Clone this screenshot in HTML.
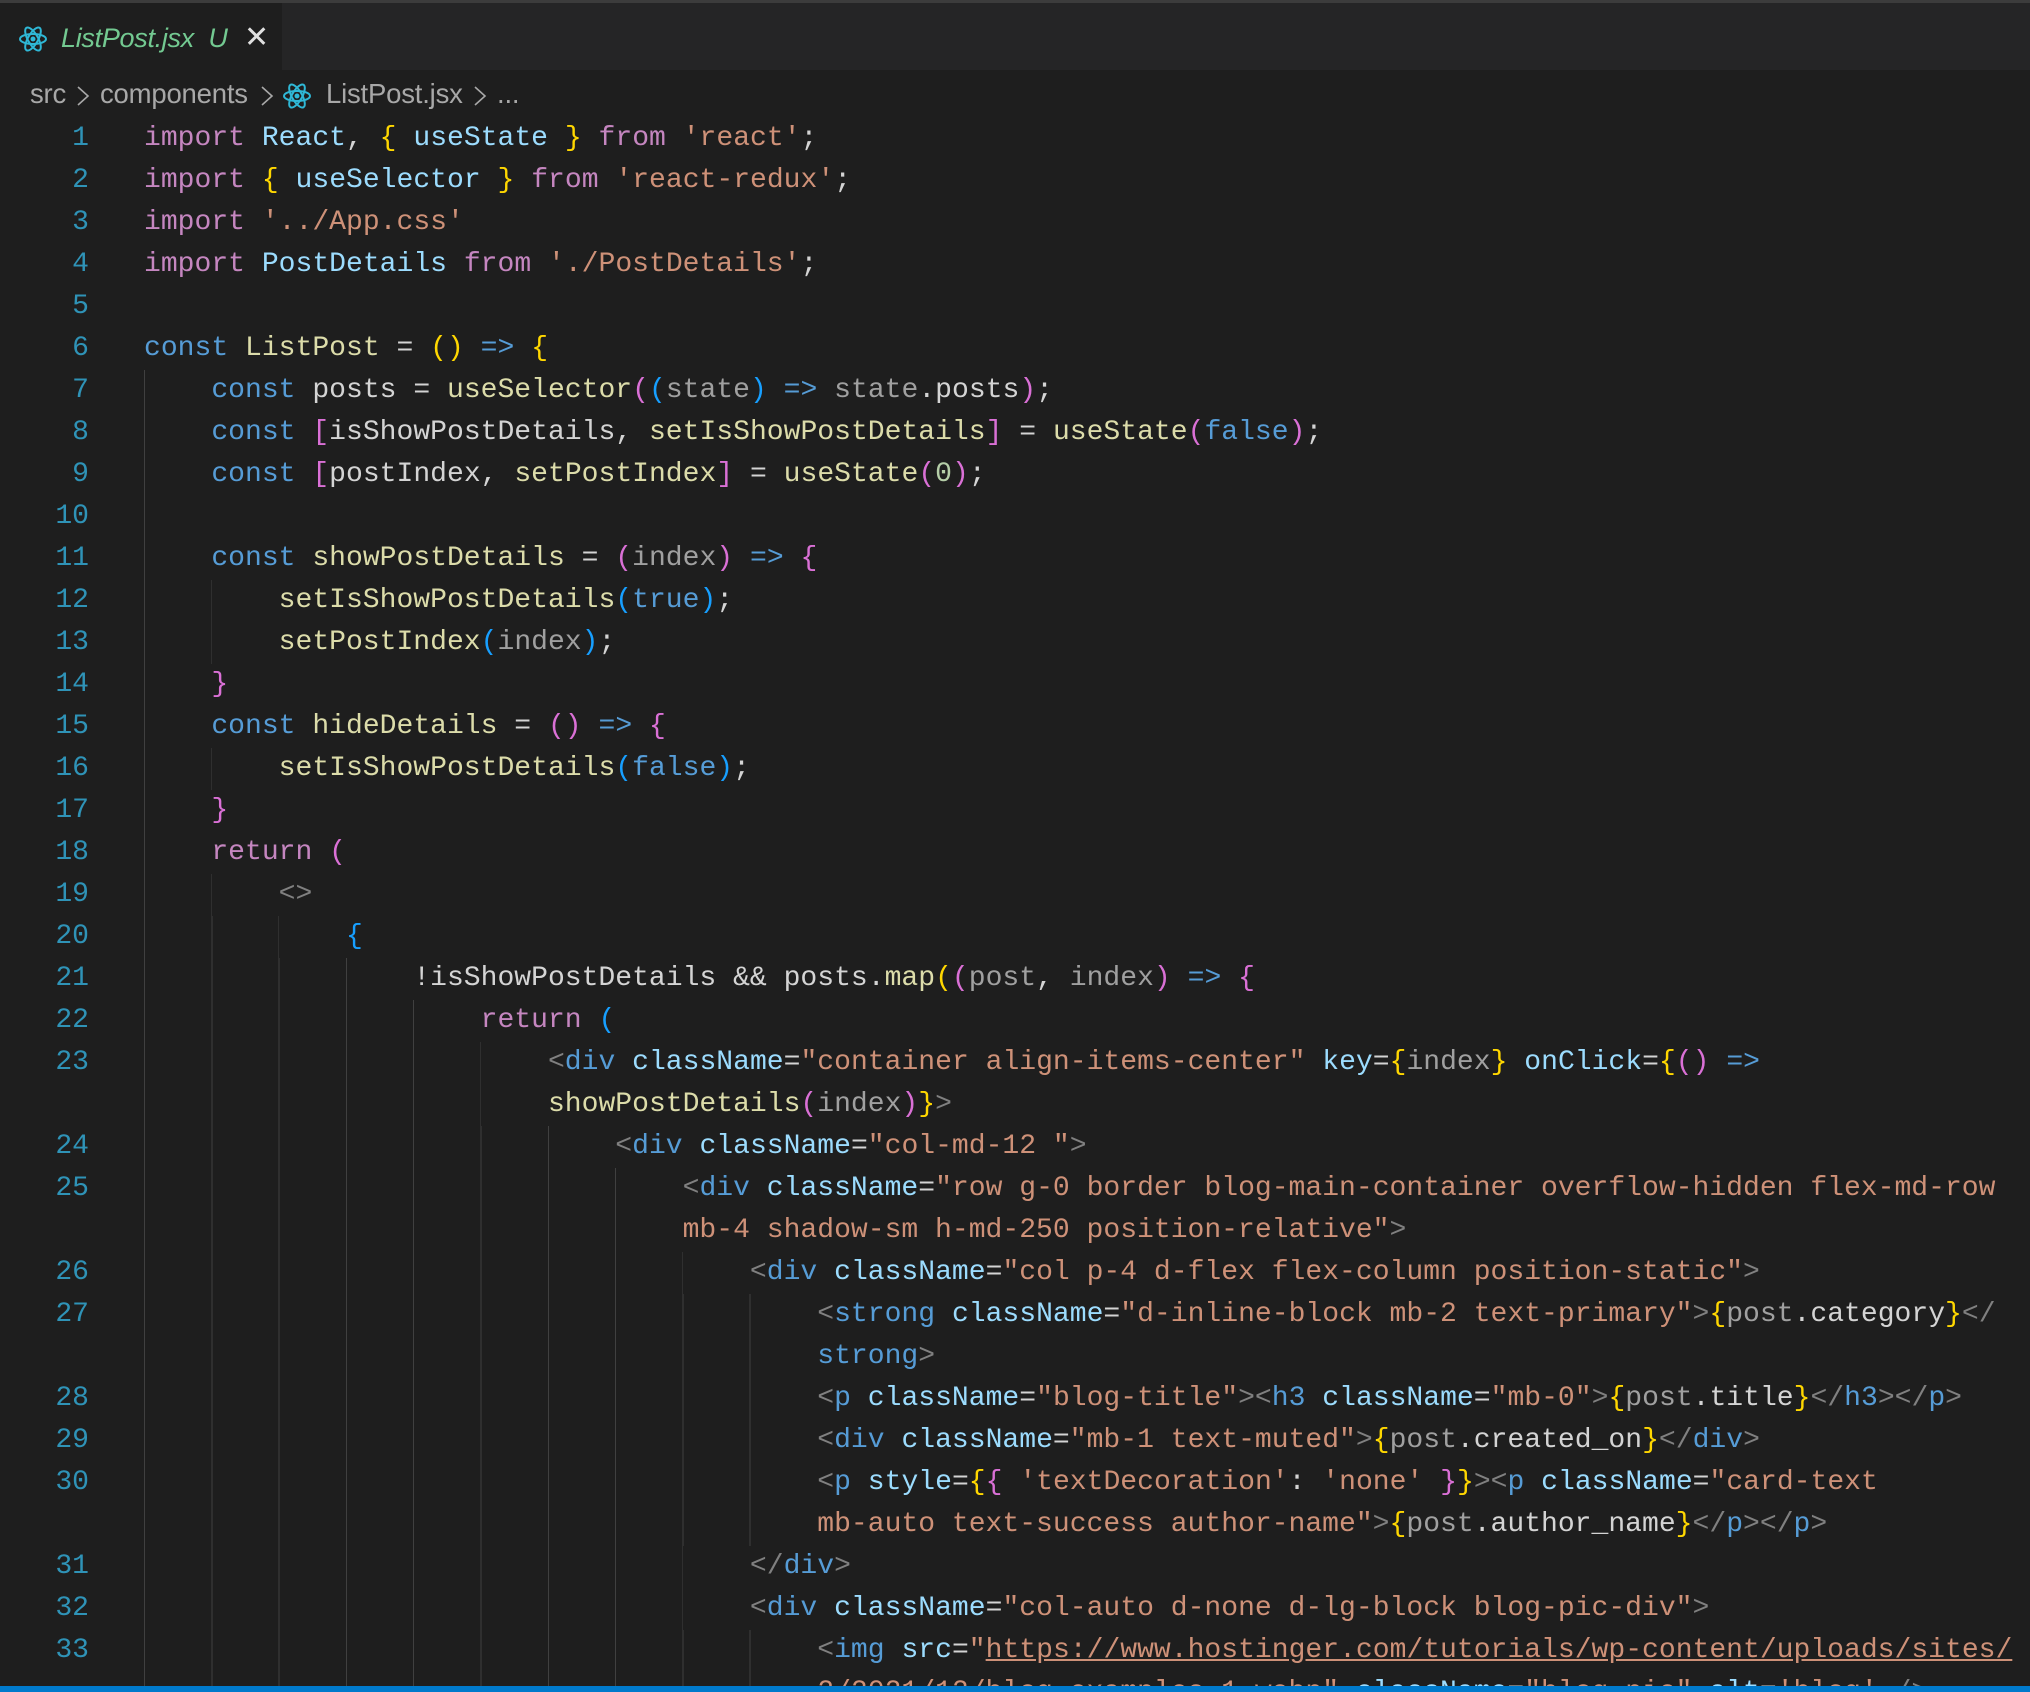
<!DOCTYPE html>
<html><head><meta charset="utf-8"><style>
html,body{margin:0;padding:0;background:#1e1e1e;width:2030px;height:1692px;overflow:hidden;position:relative}
.topline{position:absolute;left:0;top:0;width:2030px;height:3px;background:#3c3c3c}
.tabbar{position:absolute;left:0;top:3px;width:2030px;height:67px;background:#252526}
.tab{position:absolute;left:0;top:3px;width:282px;height:67px;background:#1e1e1e}
.tabtxt{position:absolute;left:61px;top:20px;font:italic 27px "Liberation Sans",sans-serif;color:#73c991;white-space:pre;letter-spacing:-0.3px}
.x{position:absolute;left:244px;top:17px;font:30px "Liberation Sans",sans-serif;color:#e0e0e0}
.bc{position:absolute;top:78px;font:27.5px "Liberation Sans",sans-serif;color:#a8a8a8;white-space:pre;line-height:32px;letter-spacing:-0.2px}
.row{position:absolute;left:0;height:42px;width:2030px;line-height:42px;font-family:"Liberation Mono",monospace;font-size:28.05px;white-space:pre;color:#d4d4d4;margin-top:3px}
.ln{position:absolute;left:0;width:89px;text-align:right;color:#2f93b7}
.code{position:absolute;left:144px}
.gd{position:absolute;left:144px;top:0;height:42px;background:repeating-linear-gradient(to right,#404040 0 1px,transparent 1px 67.3px)}
.k{color:#c586c0}.s{color:#569cd6}.v{color:#9cdcfe}.f{color:#dcdcaa}.t{color:#ce9178}.g{color:#808080}.m{color:#a0a0a0}.y{color:#ffd700}.pk{color:#da70d6}.b{color:#179fff}.n{color:#b5cea8}.w{color:#d4d4d4}.u{text-decoration:underline}
.status{position:absolute;left:0;top:1686px;width:2030px;height:6px;background:#007acc}
</style></head><body>
<div class="topline"></div>
<div class="tabbar"></div>
<div class="tab">
<svg style="position:absolute;left:18px;top:21px" width="30" height="30" viewBox="-15 -15 30 30"><g fill="none" stroke="#2fb8d6" stroke-width="2"><ellipse rx="13" ry="5"/><ellipse rx="13" ry="5" transform="rotate(60)"/><ellipse rx="13" ry="5" transform="rotate(120)"/></g><circle r="2.5" fill="#2fb8d6"/></svg>
<div class="tabtxt">ListPost.jsx  U</div>
<div class="x">✕</div>
</div>
<div class="bc" style="left:30px">src</div>
<div class="bc" style="left:100px">components</div>
<div class="bc" style="left:326px">ListPost.jsx</div>
<div class="bc" style="left:497px">...</div>
<svg style="position:absolute;left:0;top:80px" width="520" height="32"><g fill="none" stroke="#a8a8a8" stroke-width="1.6"><path d="M78 7 L88 16 L78 25"/><path d="M262 7 L272 16 L262 25"/><path d="M475 7 L485 16 L475 25"/></g></svg>
<svg style="position:absolute;left:282px;top:81px" width="30" height="30" viewBox="-15 -15 30 30"><g fill="none" stroke="#2fb8d6" stroke-width="2"><ellipse rx="13" ry="5"/><ellipse rx="13" ry="5" transform="rotate(60)"/><ellipse rx="13" ry="5" transform="rotate(120)"/></g><circle r="2.5" fill="#2fb8d6"/></svg>

<div class="row" style="top:115px"><span class="ln">1</span><span class="code"><span class="k">import</span> <span class="v">React</span>, <span class="y">{</span> <span class="v">useState</span> <span class="y">}</span> <span class="k">from</span> <span class="t">'react'</span>;</span></div>
<div class="row" style="top:157px"><span class="ln">2</span><span class="code"><span class="k">import</span> <span class="y">{</span> <span class="v">useSelector</span> <span class="y">}</span> <span class="k">from</span> <span class="t">'react-redux'</span>;</span></div>
<div class="row" style="top:199px"><span class="ln">3</span><span class="code"><span class="k">import</span> <span class="t">'../App.css'</span></span></div>
<div class="row" style="top:241px"><span class="ln">4</span><span class="code"><span class="k">import</span> <span class="v">PostDetails</span> <span class="k">from</span> <span class="t">'./PostDetails'</span>;</span></div>
<div class="row" style="top:283px"><span class="ln">5</span></div>
<div class="row" style="top:325px"><span class="ln">6</span><span class="code"><span class="s">const</span> <span class="f">ListPost</span> = <span class="y">()</span> <span class="s">=&gt;</span> <span class="y">{</span></span></div>
<div class="row" style="top:367px"><span class="ln">7</span><span class="gd" style="width:1px"></span><span class="code">    <span class="s">const</span> <span class="w">posts</span> = <span class="f">useSelector</span><span class="pk">(</span><span class="b">(</span><span class="m">state</span><span class="b">)</span> <span class="s">=&gt;</span> <span class="m">state</span>.<span class="w">posts</span><span class="pk">)</span>;</span></div>
<div class="row" style="top:409px"><span class="ln">8</span><span class="gd" style="width:1px"></span><span class="code">    <span class="s">const</span> <span class="pk">[</span><span class="w">isShowPostDetails</span>, <span class="f">setIsShowPostDetails</span><span class="pk">]</span> = <span class="f">useState</span><span class="pk">(</span><span class="s">false</span><span class="pk">)</span>;</span></div>
<div class="row" style="top:451px"><span class="ln">9</span><span class="gd" style="width:1px"></span><span class="code">    <span class="s">const</span> <span class="pk">[</span><span class="w">postIndex</span>, <span class="f">setPostIndex</span><span class="pk">]</span> = <span class="f">useState</span><span class="pk">(</span><span class="n">0</span><span class="pk">)</span>;</span></div>
<div class="row" style="top:493px"><span class="ln">10</span><span class="gd" style="width:1px"></span></div>
<div class="row" style="top:535px"><span class="ln">11</span><span class="gd" style="width:1px"></span><span class="code">    <span class="s">const</span> <span class="f">showPostDetails</span> = <span class="pk">(</span><span class="m">index</span><span class="pk">)</span> <span class="s">=&gt;</span> <span class="pk">{</span></span></div>
<div class="row" style="top:577px"><span class="ln">12</span><span class="gd" style="width:68px"></span><span class="code">        <span class="f">setIsShowPostDetails</span><span class="b">(</span><span class="s">true</span><span class="b">)</span>;</span></div>
<div class="row" style="top:619px"><span class="ln">13</span><span class="gd" style="width:68px"></span><span class="code">        <span class="f">setPostIndex</span><span class="b">(</span><span class="m">index</span><span class="b">)</span>;</span></div>
<div class="row" style="top:661px"><span class="ln">14</span><span class="gd" style="width:1px"></span><span class="code">    <span class="pk">}</span></span></div>
<div class="row" style="top:703px"><span class="ln">15</span><span class="gd" style="width:1px"></span><span class="code">    <span class="s">const</span> <span class="f">hideDetails</span> = <span class="pk">()</span> <span class="s">=&gt;</span> <span class="pk">{</span></span></div>
<div class="row" style="top:745px"><span class="ln">16</span><span class="gd" style="width:68px"></span><span class="code">        <span class="f">setIsShowPostDetails</span><span class="b">(</span><span class="s">false</span><span class="b">)</span>;</span></div>
<div class="row" style="top:787px"><span class="ln">17</span><span class="gd" style="width:1px"></span><span class="code">    <span class="pk">}</span></span></div>
<div class="row" style="top:829px"><span class="ln">18</span><span class="gd" style="width:1px"></span><span class="code">    <span class="k">return</span> <span class="pk">(</span></span></div>
<div class="row" style="top:871px"><span class="ln">19</span><span class="gd" style="width:68px"></span><span class="code">        <span class="g">&lt;&gt;</span></span></div>
<div class="row" style="top:913px"><span class="ln">20</span><span class="gd" style="width:135px"></span><span class="code">            <span class="b">{</span></span></div>
<div class="row" style="top:955px"><span class="ln">21</span><span class="gd" style="width:203px"></span><span class="code">                !<span class="w">isShowPostDetails</span> &amp;&amp; <span class="w">posts</span>.<span class="f">map</span><span class="y">(</span><span class="pk">(</span><span class="m">post</span>, <span class="m">index</span><span class="pk">)</span> <span class="s">=&gt;</span> <span class="pk">{</span></span></div>
<div class="row" style="top:997px"><span class="ln">22</span><span class="gd" style="width:270px"></span><span class="code">                    <span class="k">return</span> <span class="b">(</span></span></div>
<div class="row" style="top:1039px"><span class="ln">23</span><span class="gd" style="width:337px"></span><span class="code">                        <span class="g">&lt;</span><span class="s">div</span> <span class="v">className</span>=<span class="t">"container align-items-center"</span> <span class="v">key</span>=<span class="y">{</span><span class="m">index</span><span class="y">}</span> <span class="v">onClick</span>=<span class="y">{</span><span class="pk">()</span> <span class="s">=&gt;</span></span></div>
<div class="row" style="top:1081px"><span class="gd" style="width:337px"></span><span class="code">                        <span class="f">showPostDetails</span><span class="pk">(</span><span class="m">index</span><span class="pk">)</span><span class="y">}</span><span class="g">&gt;</span></span></div>
<div class="row" style="top:1123px"><span class="ln">24</span><span class="gd" style="width:405px"></span><span class="code">                            <span class="g">&lt;</span><span class="s">div</span> <span class="v">className</span>=<span class="t">"col-md-12 "</span><span class="g">&gt;</span></span></div>
<div class="row" style="top:1165px"><span class="ln">25</span><span class="gd" style="width:472px"></span><span class="code">                                <span class="g">&lt;</span><span class="s">div</span> <span class="v">className</span>=<span class="t">"row g-0 border blog-main-container overflow-hidden flex-md-row</span></span></div>
<div class="row" style="top:1207px"><span class="gd" style="width:472px"></span><span class="code">                                <span class="t">mb-4 shadow-sm h-md-250 position-relative"</span><span class="g">&gt;</span></span></div>
<div class="row" style="top:1249px"><span class="ln">26</span><span class="gd" style="width:539px"></span><span class="code">                                    <span class="g">&lt;</span><span class="s">div</span> <span class="v">className</span>=<span class="t">"col p-4 d-flex flex-column position-static"</span><span class="g">&gt;</span></span></div>
<div class="row" style="top:1291px"><span class="ln">27</span><span class="gd" style="width:607px"></span><span class="code">                                        <span class="g">&lt;</span><span class="s">strong</span> <span class="v">className</span>=<span class="t">"d-inline-block mb-2 text-primary"</span><span class="g">&gt;</span><span class="y">{</span><span class="m">post</span>.<span class="w">category</span><span class="y">}</span><span class="g">&lt;/</span></span></div>
<div class="row" style="top:1333px"><span class="gd" style="width:607px"></span><span class="code">                                        <span class="s">strong</span><span class="g">&gt;</span></span></div>
<div class="row" style="top:1375px"><span class="ln">28</span><span class="gd" style="width:607px"></span><span class="code">                                        <span class="g">&lt;</span><span class="s">p</span> <span class="v">className</span>=<span class="t">"blog-title"</span><span class="g">&gt;&lt;</span><span class="s">h3</span> <span class="v">className</span>=<span class="t">"mb-0"</span><span class="g">&gt;</span><span class="y">{</span><span class="m">post</span>.<span class="w">title</span><span class="y">}</span><span class="g">&lt;/</span><span class="s">h3</span><span class="g">&gt;&lt;/</span><span class="s">p</span><span class="g">&gt;</span></span></div>
<div class="row" style="top:1417px"><span class="ln">29</span><span class="gd" style="width:607px"></span><span class="code">                                        <span class="g">&lt;</span><span class="s">div</span> <span class="v">className</span>=<span class="t">"mb-1 text-muted"</span><span class="g">&gt;</span><span class="y">{</span><span class="m">post</span>.<span class="w">created_on</span><span class="y">}</span><span class="g">&lt;/</span><span class="s">div</span><span class="g">&gt;</span></span></div>
<div class="row" style="top:1459px"><span class="ln">30</span><span class="gd" style="width:607px"></span><span class="code">                                        <span class="g">&lt;</span><span class="s">p</span> <span class="v">style</span>=<span class="y">{</span><span class="pk">{</span> <span class="t">'textDecoration'</span>: <span class="t">'none'</span> <span class="pk">}</span><span class="y">}</span><span class="g">&gt;&lt;</span><span class="s">p</span> <span class="v">className</span>=<span class="t">"card-text</span></span></div>
<div class="row" style="top:1501px"><span class="gd" style="width:607px"></span><span class="code">                                        <span class="t">mb-auto text-success author-name"</span><span class="g">&gt;</span><span class="y">{</span><span class="m">post</span>.<span class="w">author_name</span><span class="y">}</span><span class="g">&lt;/</span><span class="s">p</span><span class="g">&gt;&lt;/</span><span class="s">p</span><span class="g">&gt;</span></span></div>
<div class="row" style="top:1543px"><span class="ln">31</span><span class="gd" style="width:539px"></span><span class="code">                                    <span class="g">&lt;/</span><span class="s">div</span><span class="g">&gt;</span></span></div>
<div class="row" style="top:1585px"><span class="ln">32</span><span class="gd" style="width:539px"></span><span class="code">                                    <span class="g">&lt;</span><span class="s">div</span> <span class="v">className</span>=<span class="t">"col-auto d-none d-lg-block blog-pic-div"</span><span class="g">&gt;</span></span></div>
<div class="row" style="top:1627px"><span class="ln">33</span><span class="gd" style="width:607px"></span><span class="code">                                        <span class="g">&lt;</span><span class="s">img</span> <span class="v">src</span>=<span class="t">"<span class="u">https://www.hostinger.com/tutorials/wp-content/uploads/sites/</span></span></span></div>
<div class="row" style="top:1669px"><span class="gd" style="width:607px"></span><span class="code">                                        <span class="t u">2/2021/12/blog-examples-1.webp</span><span class="t">"</span> <span class="v">className</span>=<span class="t">"blog-pic"</span> <span class="v">alt</span>=<span class="t">'blog'</span> <span class="g">/&gt;</span></span></div>
<div class="status"></div>
</body></html>
